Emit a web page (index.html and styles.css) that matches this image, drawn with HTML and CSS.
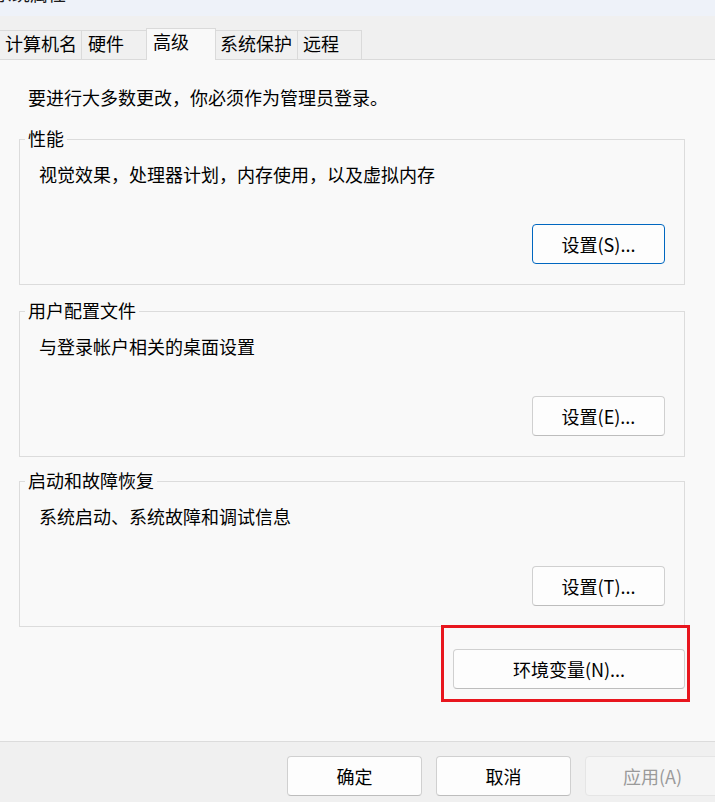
FILE: index.html
```html
<!DOCTYPE html>
<html lang="zh-CN">
<head>
<meta charset="utf-8">
<title>系统属性</title>
<link rel="stylesheet" href="styles.css">
</head>
<body>
<div class="window">
  <div class="titlebar">
    <span class="title">系统属性</span>
    <span class="close">✕</span>
  </div>
  <div class="tabstrip">
    <div class="tab tab-1">计算机名</div>
    <div class="tab tab-2">硬件</div>
    <div class="tab tab-3 selected">高级</div>
    <div class="tab tab-4">系统保护</div>
    <div class="tab tab-5">远程</div>
  </div>
  <div class="panel">
    <p class="intro">要进行大多数更改，你必须作为管理员登录。</p>

    <fieldset class="group group-1">
      <legend>性能</legend>
      <div class="desc">视觉效果，处理器计划，内存使用，以及虚拟内存</div>
      <div class="btn-row"><button class="btn btn-default">设置(S)...</button></div>
    </fieldset>

    <fieldset class="group group-2">
      <legend>用户配置文件</legend>
      <div class="desc">与登录帐户相关的桌面设置</div>
      <div class="btn-row"><button class="btn">设置(E)...</button></div>
    </fieldset>

    <fieldset class="group group-3">
      <legend>启动和故障恢复</legend>
      <div class="desc">系统启动、系统故障和调试信息</div>
      <div class="btn-row"><button class="btn">设置(T)...</button></div>
    </fieldset>

    <div class="env-row">
      <div class="env-wrap">
        <button class="btn btn-env">环境变量(N)...</button>
        <span class="highlight"></span>
      </div>
    </div>
  </div>
  <div class="footer">
    <button class="btn btn-foot">确定</button>
    <button class="btn btn-foot">取消</button>
    <button class="btn btn-foot disabled">应用(A)</button>
  </div>
</div>
</body>
</html>
```

FILE: styles.css
```css
html, body {
  margin: 0;
  padding: 0;
}

body {
  width: 715px;
  height: 802px;
  overflow: hidden;
  background: #f0f0f0;
  font-family: "Noto Sans CJK SC", "Noto Sans", "Liberation Sans", sans-serif;
  font-size: 18px;
  line-height: 24px;
  color: #000;
}

.window {
  display: flex;
  flex-direction: column;
  width: 715px;
  height: 802px;
}

/* title bar (mostly cropped) */
.titlebar {
  height: 16px;
  background: #eef2f9;
  display: flex;
  justify-content: space-between;
  overflow: hidden;
  flex: none;
}

.title {
  margin-top: -17px;
  margin-left: -6px;
  font-size: 18px;
  line-height: 20px;
  color: #1a1a1a;
}

.close {
  margin-top: -13px;
  margin-right: 3px;
  font-size: 14px;
  line-height: 16px;
  color: #1a1a1a;
  font-family: "DejaVu Sans", sans-serif;
}

/* tabs */
.tabstrip {
  height: 43px;
  flex: none;
  display: flex;
  align-items: flex-end;
  background: #f0f0f0;
}

.tab {
  box-sizing: border-box;
  height: 29px;
  margin-left: -1px;
  padding: 0 0 0 5px;
  border: 1px solid #dadada;
  border-bottom: none;
  background: #f0f0f0;
  white-space: nowrap;
  line-height: 24px;
}

.tab-1 { width: 83px; }
.tab-2 { width: 66px; padding-left: 6px; }
.tab-3 { width: 70px; padding-left: 6px; }
.tab-4 { width: 83px; padding-left: 4px; }
.tab-5 { width: 65px; }

.tab.selected {
  height: 32px;
  margin-bottom: -1px;
  background: #f9f9f9;
  position: relative;
  z-index: 1;
}

/* main panel */
.panel {
  box-sizing: border-box;
  height: 683px;
  flex: none;
  background: #f9f9f9;
  border-top: 1px solid #dadada;
  border-bottom: 1px solid #dcdcdc;
  padding: 25px 30px 0 19px;
}

.intro {
  margin: 0 0 0 9px;
  line-height: 24px;
}

.group {
  margin: 0;
  padding: 0;
  border: 1px solid #dcdcdc;
  min-inline-size: 0;
}

.group-1 { margin-top: 18px; }
.group-2 { margin-top: 14px; }
.group-3 { margin-top: 12px; }

.group legend {
  margin-left: 5px;
  padding: 0 3px 2px 3px;
  line-height: 22px;
}

.desc {
  margin: 11px 0 0 19px;
  line-height: 24px;
}

.btn-row {
  display: flex;
  justify-content: flex-end;
  margin: 38px 19px 20px 0;
}

/* buttons */
.btn {
  box-sizing: border-box;
  height: 40px;
  margin: 0;
  padding: 0 0 1px 0;
  font-family: inherit;
  font-size: 18px;
  line-height: 24px;
  color: #000;
  background: #fdfdfd;
  border: 1px solid #d0d0d0;
  border-bottom-color: #bdbdbd;
  border-radius: 4px;
  white-space: nowrap;
}

.btn-row .btn {
  width: 133px;
}

.btn-default {
  border-color: #0067c0;
  border-bottom-color: #0067c0;
}

.env-row {
  display: flex;
  justify-content: flex-end;
  margin-top: 22px;
}

.env-wrap {
  position: relative;
  display: flex;
}

.btn-env {
  width: 232px;
}

/* red annotation rectangle overlaid on the button */
.highlight {
  position: absolute;
  left: -12px;
  top: -24px;
  right: -5px;
  bottom: -13px;
  border: 3px solid #e8161e;
  pointer-events: none;
}

/* footer */
.footer {
  flex: 1;
  display: flex;
  gap: 14px;
  padding: 14px 0 0 287px;
  background: #f0f0f0;
  overflow: hidden;
}

.btn-foot {
  width: 135px;
  flex: none;
}

.btn-foot.disabled {
  background: #f5f5f5;
  border-color: #e5e5e5;
  color: #9a9a9a;
}
```
